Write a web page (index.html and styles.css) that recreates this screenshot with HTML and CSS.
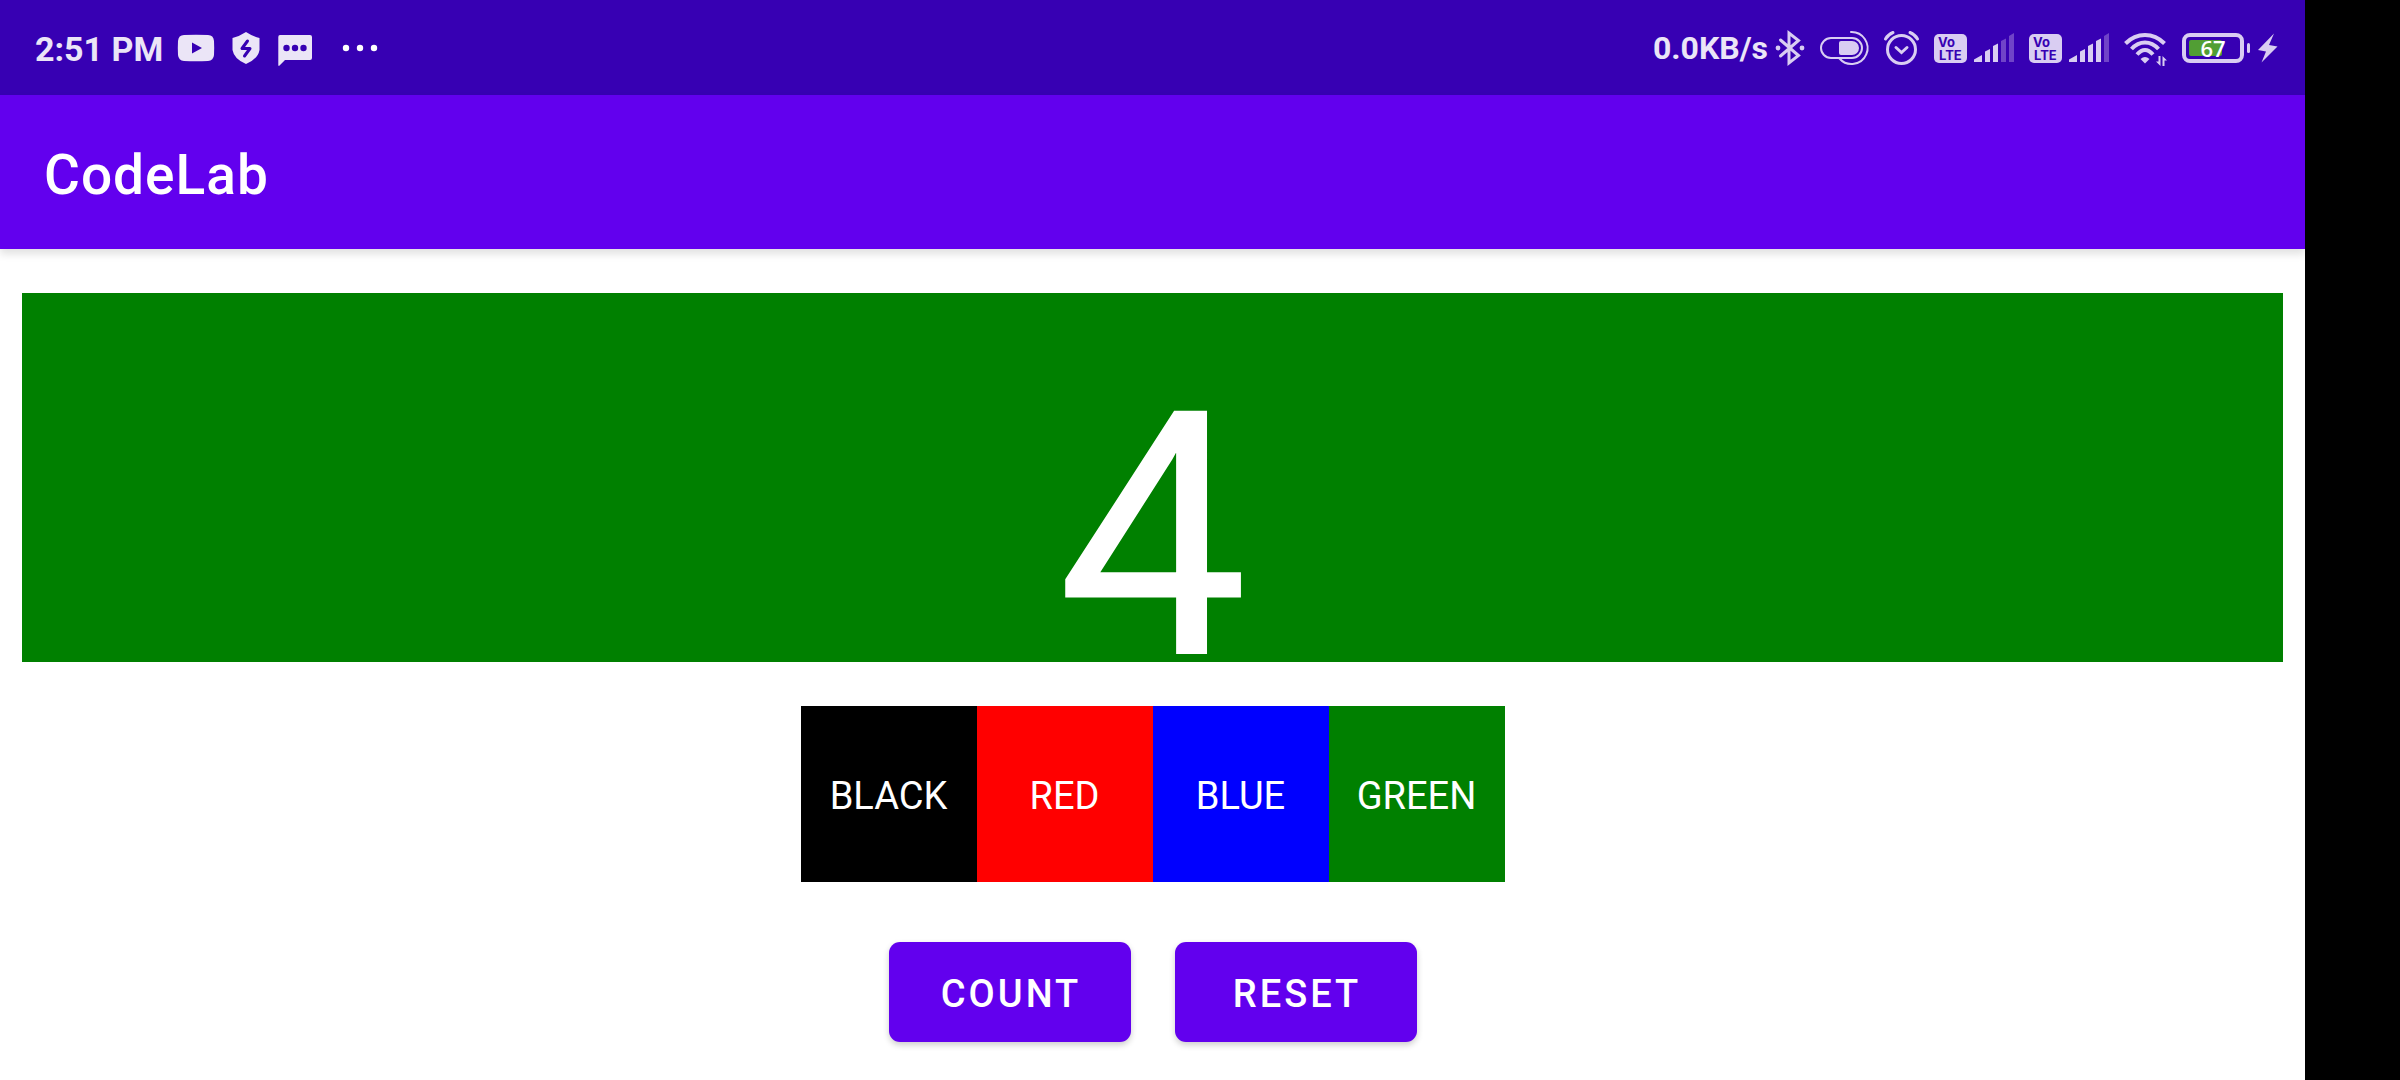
FILE: index.html
```html
<!DOCTYPE html>
<html lang="en">
<head>
<meta charset="utf-8">
<meta name="viewport" content="width=device-width, initial-scale=1">
<title>CodeLab</title>
<link rel="stylesheet" href="styles.css">
</head>
<body>
<div class="screen">
  <div class="status-bar">
    <div class="status-left">
      <span class="clock">2:51 PM</span>
      <div class="notifications">
        <svg class="icon" width="36" height="36" viewBox="0 0 36 36" aria-hidden="true"><path fill-rule="evenodd" d="M6 5Q18 4.400 30 5Q35.500 5 36 11Q36.400 18 36 25Q35.500 30.600 30 31Q18 31.400 6 31Q.5 30.600 0 25Q-.4 18 0 11Q.5 5 6 5ZM14 12.500V23.500L24 18Z"/></svg>
        <svg class="icon" width="28" height="36" viewBox="0 0 28 36" aria-hidden="true"><path d="M14 2Q20 6 27.500 8V20Q26 29 14 34Q2 29 .5 20V8Q8 6 14 2Z"/><path class="cut-line" d="M15.500 11L10 18.500H18L12.500 26"/></svg>
        <svg class="icon" width="34" height="36" viewBox="0 0 34 36" aria-hidden="true"><path d="M2 5H32Q34 5 34 7V28Q34 30 32 30H7L1 36Q.3 36 .3 35V7Q.3 5 2 5Z"/><g class="cut"><circle cx="8.500" cy="18" r="3.200"/><circle cx="17" cy="18" r="3.200"/><circle cx="25.500" cy="18" r="3.200"/></g></svg>
        <svg class="icon more" width="36" height="36" viewBox="0 0 36 36" aria-hidden="true"><circle cx="4" cy="18" r="3.200"/><circle cx="18" cy="18" r="3.200"/><circle cx="32" cy="18" r="3.200"/></svg>
      </div>
    </div>
    <div class="status-right">
      <div class="status-group">
        <span class="speed">0.0KB/s</span>
        <svg class="icon soft" width="30" height="36" viewBox="0 0 30 36" aria-hidden="true"><path class="line" d="M5.500 10L23.500 25.500L14 33V3L23.500 10.500L5.500 26"/><circle cx="3" cy="18" r="2.400"/><circle cx="27" cy="18" r="2.400"/></svg>
      </div>
      <svg class="icon soft" width="49" height="36" viewBox="0 0 49 36" aria-hidden="true"><rect class="line thin" x="1" y="8" width="41" height="20" rx="10"/><path d="M21 11H32A7 7 0 0 1 32 25H21Q19 25 19 23V13Q19 11 21 11Z"/><path class="line thin" d="M31 2A16 16 0 1 1 19.500 28.500"/></svg>
      <svg class="icon soft" width="35" height="36" viewBox="0 0 35 36" aria-hidden="true"><circle class="line" cx="17.500" cy="19.500" r="14"/><path class="line" d="M1.500 9Q4 4.500 9 2.500M33.500 9Q31 4.500 26 2.500M12 17.500L17.500 22.500L23 17.500"/></svg>
      <div class="status-group">
        <svg class="icon soft" width="33" height="36" viewBox="0 0 33 36" aria-label="VoLTE"><rect y="4" width="33" height="29" rx="5"/><text class="lte" x="4" y="17">Vo</text><text class="lte" x="5" y="30">LTE</text></svg>
        <svg class="icon soft" width="40" height="36" viewBox="0 0 40 36" aria-hidden="true"><path d="M0 32V29.500L8 25V32ZM11 32V21.500L16 19V32ZM19 32V16L24 13.500V32Z"/><path class="dim" d="M27 32V11L32 8.500V32ZM35 32V6L40 3V32Z"/></svg>
      </div>
      <div class="status-group">
        <svg class="icon soft" width="33" height="36" viewBox="0 0 33 36" aria-label="VoLTE"><rect y="4" width="33" height="29" rx="5"/><text class="lte" x="4" y="17">Vo</text><text class="lte" x="5" y="30">LTE</text></svg>
        <svg class="icon soft" width="40" height="36" viewBox="0 0 40 36" aria-hidden="true"><path d="M0 32V29.500L8 25V32ZM11 32V21.500L16 19V32ZM19 32V16L24 13.500V32ZM27 32V11L32 8.500V32Z"/><path class="dim" d="M35 32V6L40 3V32Z"/></svg>
      </div>
      <svg class="icon soft" width="43" height="36" viewBox="0 0 43 36" aria-hidden="true"><path class="line wave" d="M1.500 13.500Q10 5 21 5T40.500 13.500M7.500 19Q13.500 12.500 21 12.500T34.500 19M13 24.500Q17 20 21 20T29 24.500"/><path d="M16.500 29Q21 25 25.500 29L21 33.500Z"/><path d="M34.500 26H36.500V36L32 31.500H34.500ZM38.500 26L43 30.500H40.500V36H38.500Z"/></svg>
      <div class="status-group">
        <svg class="icon soft" width="69" height="36" viewBox="0 0 69 36" aria-label="Battery 67 percent"><rect class="line case" x="2" y="5" width="58" height="26" rx="6"/><rect class="charge" x="7" y="10" width="33" height="16" rx="2"/><rect x="65" y="13" width="3" height="10" rx="1.500"/><text class="percent" x="31" y="27" text-anchor="middle">67</text></svg>
        <svg class="icon soft" width="20" height="36" viewBox="0 0 20 36" aria-hidden="true"><path d="M16 3.500L0 20L8 21.500L3.500 32.500L19.500 16.500L11 15Z"/></svg>
      </div>
    </div>
  </div>

  <header class="app-bar"><h1 class="app-title">CodeLab</h1></header>

  <main class="content">
    <output class="counter" for="count">4</output>
    <div class="swatches">
      <button type="button" class="swatch black">BLACK</button>
      <button type="button" class="swatch red">RED</button>
      <button type="button" class="swatch blue">BLUE</button>
      <button type="button" class="swatch green">GREEN</button>
    </div>
    <div class="actions">
      <button type="button" class="action" id="count">COUNT</button>
      <button type="button" class="action">RESET</button>
    </div>
  </main>
</div>
</body>
</html>
```
FILE: styles.css
```css
* {
  box-sizing: border-box;
}

body {
  margin: 0;
  padding-right: 95px;
  background: #000;
  font-family: Roboto, "Liberation Sans", sans-serif;
}

button {
  margin: 0;
  border: 0;
  color: #fff;
  font-family: inherit;
  font-size: 38px;
}

.screen {
  display: flex;
  flex-direction: column;
  min-height: 100vh;
  background: #fff;
}

/* Status bar */
.status-bar {
  display: flex;
  justify-content: space-between;
  align-items: center;
  height: 95px;
  padding: 0 27px 0 35px;
  background: #3700b3;
  color: #ebe5f7;
}

.status-left {
  display: flex;
  align-items: center;
  gap: 15px;
}

.notifications {
  display: flex;
  align-items: center;
  gap: 18px;
}

.status-right {
  display: flex;
  align-items: center;
  gap: 15px;
}

.status-group {
  display: flex;
  align-items: center;
  gap: 7px;
}

.clock {
  padding-top: 2px;
  font-size: 34px;
  font-weight: 700;
}

.speed {
  font-size: 32px;
  font-weight: 700;
}

.icon {
  display: block;
  flex: none;
  overflow: visible;
  fill: #ebe5f7;
}

.soft {
  fill: #d9cdf2;
}

.more {
  margin-left: 12px;
  fill: #fff;
}

.line {
  fill: none;
  stroke: #d9cdf2;
  stroke-width: 3;
  stroke-linecap: round;
  stroke-linejoin: miter;
}

.thin {
  stroke-width: 2;
}

.wave {
  stroke-width: 4;
  stroke-linecap: butt;
}

.case {
  stroke-width: 4;
}

.cut {
  fill: #3700b3;
}

.cut-line {
  fill: none;
  stroke: #3700b3;
  stroke-width: 3;
  stroke-linecap: round;
  stroke-linejoin: round;
}

.dim {
  fill: #7044c8;
}

.charge {
  fill: #519e34;
}

.lte {
  fill: #3700b3;
  font: 700 13px Inter, sans-serif;
}

.percent {
  fill: #fff;
  font: 600 22px "Open Sans", sans-serif;
}

/* App bar */
.app-bar {
  display: flex;
  align-items: center;
  height: 154px;
  padding: 5px 44px 0;
  background: #6200ee;
  box-shadow: 0 5px 8px rgba(0, 0, 0, 0.12);
}

.app-title {
  margin: 0;
  color: #fff;
  font-size: 55px;
  font-weight: 500;
  letter-spacing: 1px;
}

/* Counter screen */
.content {
  display: flex;
  flex: 1;
  flex-direction: column;
  align-items: center;
  padding: 44px 22px 38px;
}

.counter {
  display: block;
  flex: 1;
  align-self: stretch;
  padding-top: 119px;
  background: #008000;
  color: #fff;
  font-size: 342px;
  line-height: 250px;
  text-align: center;
}

.swatches {
  display: flex;
  margin-top: 44px;
}

.swatch {
  width: 176px;
  height: 176px;
  padding: 3px 0 0;
}

.black {
  background: #000;
}

.red {
  background: #f00;
}

.blue {
  background: #00f;
}

.green {
  background: #008000;
}

.actions {
  display: flex;
  gap: 44px;
  margin-top: 60px;
}

.action {
  width: 242px;
  height: 100px;
  padding: 3px 0 0 3px;
  border-radius: 11px;
  background: #6200ee;
  box-shadow: 0 3px 6px rgba(0, 0, 0, 0.2);
  font-weight: 500;
  letter-spacing: 3px;
}
```
